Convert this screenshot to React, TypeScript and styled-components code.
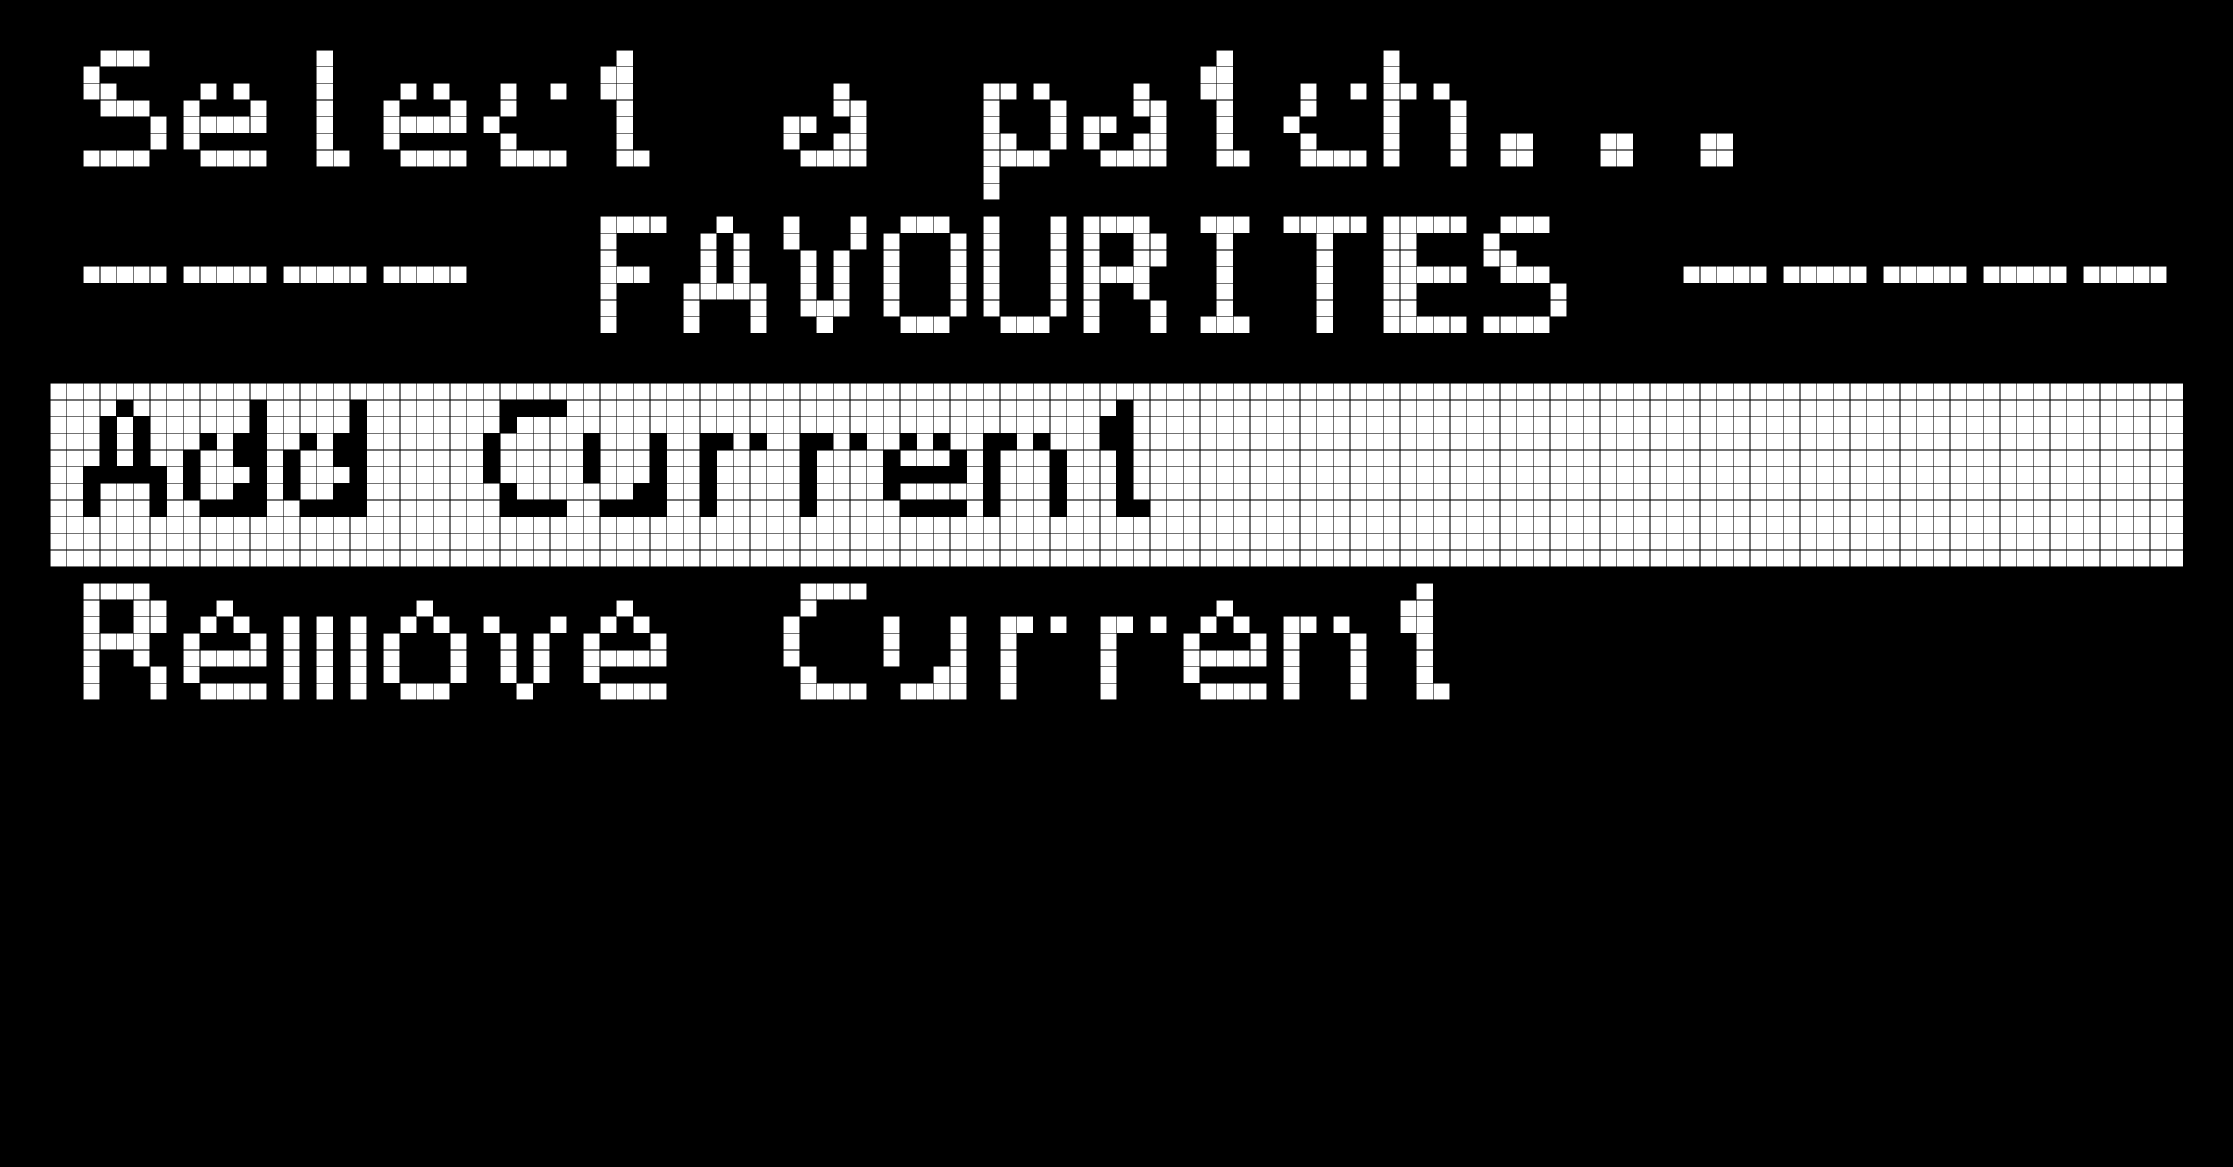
import React from 'react';
import styled, { createGlobalStyle } from 'styled-components';

const CELL = 50 / 3;
const COLS = 128;
const ROWS = 64;
const FONT_SIZE = 160;
const ADVANCE = FONT_SIZE * (1233 / 2048);
const PITCH = 6 * CELL;
const LINE_HEIGHT = 122.5;
const BASELINE = 7 * CELL;
const GLYPH_SHIFT = ADVANCE / 2 - 2.5 * CELL;
const DASH_SCALE = 1.85;
const DASH_SPACING = PITCH / DASH_SCALE - ADVANCE;

const threshold = (t: number, n = 50) =>
  Array.from({ length: n }, (_, i) => (i / n >= t ? 1 : 0)).join(' ');

const GlobalStyle = createGlobalStyle`
  html, body {
    margin: 0;
    padding: 0;
    background: #000;
  }
  body {
    width: 2233px;
    height: 1167px;
    overflow: hidden;
  }
`;

const Page = styled.div`
  box-sizing: border-box;
  width: 2233px;
  height: 1167px;
  padding: 50px;
  background: #000;
`;

const Display = styled.div`
  position: relative;
  width: ${COLS * CELL}px;
  height: ${ROWS * CELL}px;
`;

const Screen = styled.div`
  display: flex;
  flex-direction: column;
  width: 100%;
  height: 100%;
  background: #000;
  color: #fff;
  font-family: "DejaVu Sans Mono", "Liberation Mono", monospace;
  font-size: ${FONT_SIZE}px;
  letter-spacing: ${PITCH - ADVANCE}px;
  filter: url(#lcd-pixelate);
`;

const Line = styled.div<{ $rows: number; $pad?: number }>`
  box-sizing: border-box;
  flex: 0 0 auto;
  height: ${(p) => p.$rows * CELL}px;
  padding-top: ${(p) => (p.$pad ?? 0) * CELL}px;
  padding-left: ${2 * CELL - GLYPH_SHIFT}px;
  line-height: ${LINE_HEIGHT}px;
  white-space: pre;
`;

/* a run of dashes, stretched to the panel font's 5-pixel-wide dash */
const Rule = styled.span<{ $count: number }>`
  display: inline-block;
  letter-spacing: ${DASH_SPACING}px;
  margin-right: ${(p) => p.$count * (PITCH - PITCH / DASH_SCALE)}px;
  transform-origin: ${ADVANCE / 2}px ${BASELINE - 3.5 * CELL}px;
  transform: translateY(${-CELL}px) scaleX(${DASH_SCALE});
`;

/* the panel font draws full stops as 2x2 blocks */
const Dot = styled.span`
  display: inline-block;
  font-weight: 700;
  transform: translateX(${-CELL / 2}px);
`;

const Highlight = styled.div<{ $row: number; $rows: number }>`
  position: absolute;
  left: 0;
  right: 0;
  top: ${(p) => p.$row * CELL}px;
  height: ${(p) => p.$rows * CELL}px;
  background: #fff;
  mix-blend-mode: difference;
  pointer-events: none;
`;

const GRID_LINE = 'rgba(0, 0, 0, 0.55)';

const PixelGrid = styled.div`
  position: absolute;
  inset: 0;
  pointer-events: none;
  background-image:
    repeating-linear-gradient(
      to right,
      ${GRID_LINE} 0 0.8px,
      transparent 0.8px ${CELL - 0.8}px,
      ${GRID_LINE} ${CELL - 0.8}px ${CELL}px
    ),
    repeating-linear-gradient(
      to bottom,
      ${GRID_LINE} 0 0.8px,
      transparent 0.8px ${CELL - 0.8}px,
      ${GRID_LINE} ${CELL - 0.8}px ${CELL}px
    );
`;

const FilterDefs = styled.svg`
  position: absolute;
  width: 0;
  height: 0;
  overflow: hidden;
`;

const SAMPLE = [8, 24, 41];

const LcdFilter: React.FC = () => {
  const table = threshold(0.4);
  return (
    <FilterDefs aria-hidden="true">
      <defs>
        <filter
          id="lcd-pixelate"
          x="0"
          y="0"
          width="1"
          height="1"
          filterUnits="objectBoundingBox"
          primitiveUnits="userSpaceOnUse"
          colorInterpolationFilters="sRGB"
        >
          <feGaussianBlur in="SourceGraphic" stdDeviation="3.6" result="blur" />
          {SAMPLE.flatMap((y, yi) =>
            SAMPLE.map((x, xi) => (
              <feFlood
                key={`${xi}-${yi}`}
                floodColor="#fff"
                floodOpacity={1}
                x={x}
                y={y}
                width="1"
                height="1"
                result={`d${xi}${yi}`}
              />
            ))
          )}
          <feMerge x="0" y="0" width="50" height="50" result="dots">
            {SAMPLE.flatMap((_, yi) =>
              SAMPLE.map((__, xi) => <feMergeNode key={`${xi}-${yi}`} in={`d${xi}${yi}`} />)
            )}
          </feMerge>
          <feTile in="dots" result="lattice" />
          <feComposite in="blur" in2="lattice" operator="in" result="sampled" />
          <feMorphology in="sampled" operator="dilate" radius="8" result="cells" />
          <feComponentTransfer in="cells">
            <feFuncR type="discrete" tableValues={table} />
            <feFuncG type="discrete" tableValues={table} />
            <feFuncB type="discrete" tableValues={table} />
            <feFuncA type="discrete" tableValues={threshold(0.5)} />
          </feComponentTransfer>
        </filter>
      </defs>
    </FilterDefs>
  );
};

/* split a label so that dash runs and dots get the panel font's shapes */
const PanelText: React.FC<{ text: string }> = ({ text }) => {
  const tokens = text.match(/-+|\.|[^-.]+/g) ?? [];
  return (
    <>
      {tokens.map((tok, i) => {
        if (tok[0] === '-') {
          return (
            <Rule key={i} $count={tok.length}>
              {tok}
            </Rule>
          );
        }
        if (tok === '.') return <Dot key={i}>.</Dot>;
        return <React.Fragment key={i}>{tok}</React.Fragment>;
      })}
    </>
  );
};

const items = [
  { text: 'Select a patch...', rows: 10, pad: 0 },
  { text: '---- FAVOURITES -----', rows: 10, pad: 0 },
  { text: 'Add Current', rows: 11, pad: 1, selected: true },
  { text: 'Remove Current', rows: 11, pad: 1 },
];

export default function App() {
  let row = 0;
  let selRow = 0;
  let selRows = 0;
  items.forEach((it) => {
    if (it.selected) {
      selRow = row;
      selRows = it.rows;
    }
    row += it.rows;
  });
  return (
    <>
      <GlobalStyle />
      <LcdFilter />
      <Page>
        <Display>
          <Screen>
            {items.map((it) => (
              <Line key={it.text} $rows={it.rows} $pad={it.pad}>
                <PanelText text={it.text} />
              </Line>
            ))}
          </Screen>
          <Highlight $row={selRow} $rows={selRows} />
          <PixelGrid />
        </Display>
      </Page>
    </>
  );
}
